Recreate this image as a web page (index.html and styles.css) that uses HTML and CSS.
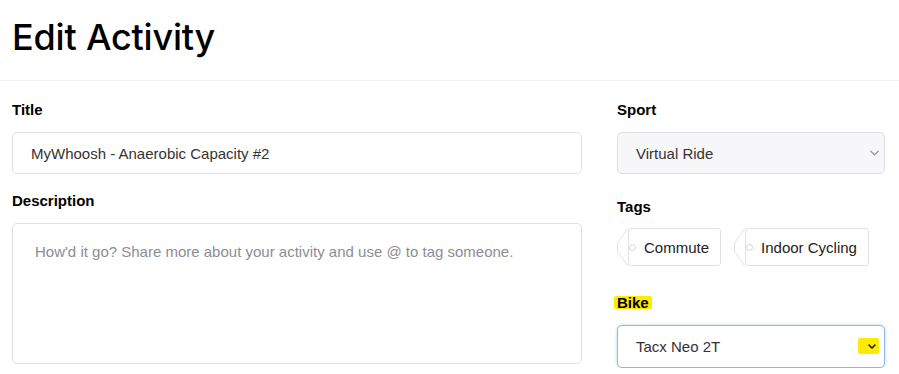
FILE: index.html
```html
<!DOCTYPE html>
<html>
<head>
  <title>Edit Activity</title>
  <meta charset="utf-8" />
  <link rel="stylesheet" href="styles.css">
</head>
<body>
<div class="header">
  <h1>Edit Activity</h1>
</div>
<div class="main">
  <div class="col-left">
    <div class="field field-title">
      <label class="label">Title</label>
      <input class="input" type="text" value="MyWhoosh - Anaerobic Capacity #2">
    </div>
    <div class="field">
      <label class="label">Description</label>
      <textarea class="textarea" placeholder="How'd it go? Share more about your activity and use @ to tag someone."></textarea>
    </div>
  </div>
  <div class="col-right">
    <div class="field field-sport">
      <label class="label">Sport</label>
      <div class="select-wrap">
        <select class="select select-grey">
          <option>Virtual Ride</option>
        </select>
        <svg class="chevron" width="9" height="6" viewBox="0 0 9 6"><path d="M0.5 0.8 L4.5 4.8 L8.5 0.8" fill="none" stroke="#8a8a92" stroke-width="1.2"/></svg>
      </div>
    </div>
    <div class="field field-tags">
      <label class="label">Tags</label>
      <div class="tags">
        <div class="tag">
          <svg class="tag-point" width="11" height="38" viewBox="0 0 11 38"><path d="M10.5 0.5 L0.5 15 L0.5 23 L10.5 37.5" fill="none" stroke="#e2e2e6"/></svg>
          <div class="tag-body">Commute</div>
        </div>
        <div class="tag">
          <svg class="tag-point" width="11" height="38" viewBox="0 0 11 38"><path d="M10.5 0.5 L0.5 15 L0.5 23 L10.5 37.5" fill="none" stroke="#e2e2e6"/></svg>
          <div class="tag-body">Indoor Cycling</div>
        </div>
      </div>
    </div>
    <div class="field">
      <label class="label"><span class="mark">Bike</span></label>
      <div class="select-wrap">
        <select class="select select-focus">
          <option>Tacx Neo 2T</option>
        </select>
        <span class="chevron-mark">
          <svg width="8" height="5" viewBox="0 0 8 5"><path d="M0.6 0.6 L4 4 L7.4 0.6" fill="none" stroke="#222" stroke-width="1.5"/></svg>
        </span>
      </div>
    </div>
  </div>
</div>
</body>
</html>
```

FILE: styles.css
```css
* {
  margin: 0;
  padding: 0;
  box-sizing: border-box;
}

body {
  font-family: "Liberation Sans", Arial, sans-serif;
  color: #242428;
  background: #fff;
}

.header {
  height: 81px;
  padding: 15px 12px 0;
  border-bottom: 1px solid #f2f2f2;
}

.header h1 {
  font-family: Inter, "Liberation Sans", Arial, sans-serif;
  font-size: 36px;
  font-weight: 500;
  line-height: 44px;
  color: #000;
  letter-spacing: -0.2px;
}

.main {
  display: flex;
  gap: 35px;
  padding: 20px 0 0 12px;
}

.col-left {
  width: 570px;
}

.col-right {
  width: 268px;
}

.label {
  display: block;
  font-size: 15px;
  font-weight: bold;
  line-height: 18px;
  margin-bottom: 13px;
  color: #000;
}

.field-title {
  margin-bottom: 18px;
}

.field-sport {
  margin-bottom: 24px;
}

.field-tags {
  margin-bottom: 28px;
}

.field-tags .label {
  margin-bottom: 12px;
}

.input,
.textarea,
.select {
  display: block;
  width: 100%;
  font-family: "Liberation Sans", Arial, sans-serif;
  font-size: 15px;
  color: #333;
  border: 1px solid #dfdfe5;
  border-radius: 5px;
  background: #fff;
  outline: none;
}

.input {
  height: 42px;
  padding: 0 18px;
}

.textarea {
  height: 141px;
  padding: 18px 22px;
  resize: none;
  line-height: 20px;
}

.textarea::placeholder {
  color: #8d8d93;
}

.select-wrap {
  position: relative;
}

.select {
  -webkit-appearance: none;
  appearance: none;
  height: 42px;
  padding: 0 18px;
}

.select-grey {
  background: #f7f7fa;
}

.select-focus {
  height: 43px;
  border-color: #8fb8e6;
  box-shadow: 0 0 3px rgba(90, 150, 220, 0.45);
}

.chevron {
  position: absolute;
  right: 6px;
  top: 18px;
}

.chevron-mark {
  position: absolute;
  left: 241px;
  top: 13px;
  width: 21px;
  height: 16px;
  background: #ffeb00;
  border-radius: 2px;
  display: flex;
  align-items: center;
  justify-content: flex-end;
  padding-right: 3px;
}

.mark {
  display: inline-block;
  background: #ffeb00;
  margin-left: -3px;
  padding: 0 3px;
  height: 13px;
  line-height: 14px;
  border-radius: 2px;
}

.tags {
  display: flex;
  gap: 13px;
}

.tag {
  display: flex;
  height: 38px;
}

.tag-point {
  display: block;
}

.tag-body {
  display: flex;
  align-items: center;
  border: 1px solid #e2e2e6;
  border-radius: 3px;
  padding-right: 11px;
  font-size: 15px;
  color: #222;
}

.tag-body::before {
  content: "";
  width: 5px;
  height: 5px;
  border: 1px solid #d4d4d8;
  border-radius: 50%;
  margin-right: 8px;
}
```
